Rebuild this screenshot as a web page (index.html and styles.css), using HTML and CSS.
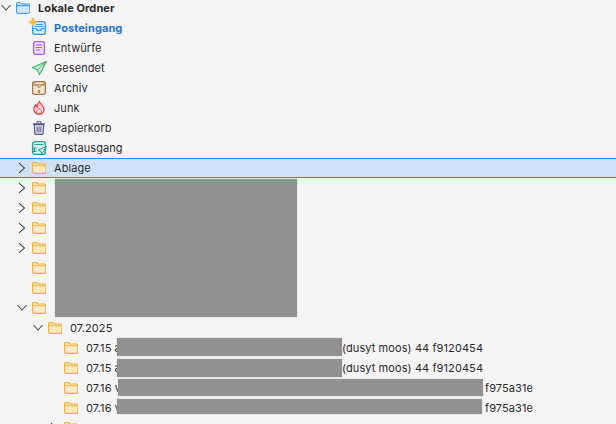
FILE: index.html
```html
<!DOCTYPE html>
<html lang="de">
<head>
<meta charset="utf-8">
<title>Lokale Ordner</title>
<link rel="stylesheet" href="styles.css">
</head>
<body>
<svg class="defs" width="0" height="0" aria-hidden="true">
  <defs>
    <symbol id="chev-r" viewBox="0 0 10 12"><path d="M2 1.200 7.600 6 2 10.800" fill="none" stroke="#444" stroke-width="1.050"/></symbol>
    <symbol id="chev-d" viewBox="0 0 12 10"><path d="M1.500 2 6 7 10.500 2" fill="none" stroke="#444" stroke-width="1.050"/></symbol>
    <symbol id="folder" viewBox="0 0 14 12"><path d="M.6 2V1.300q0-.7.7-.7h3.400l1.200 1.400h6.800q1.200 0 1.200 1.200v6.900q0 1.300-1.300 1.300H1.900Q.6 11.400.6 10.100Z" fill="#f7e8cb" stroke="#efb02e" stroke-width="1.100"/><path d="M.6 3.700h12.800" fill="none" stroke="#efb02e" stroke-width="1"/></symbol>
  </defs>
</svg>
<main class="tree">
  <div class="row top">
    <svg class="chev chev-down" width="12" height="10"><use href="#chev-d"/></svg>
    <svg class="icon" width="14" height="12" viewBox="0 0 14 12"><path d="M.6 2V1.300q0-.7.7-.7h3.400l1.200 1.400h6.800q1.200 0 1.200 1.200v6.900q0 1.300-1.300 1.300H1.900Q.6 11.400.6 10.100Z" fill="#cfe3f8" stroke="#2f8fe8" stroke-width="1"/><path d="M.6 3.700h12.800" fill="none" stroke="#2f8fe8"/></svg>
    <span class="label bold">Lokale Ordner</span>
  </div>

  <div class="row lvl1">
    <svg class="icon glyph" width="14" height="14" viewBox="0 0 14 14"><rect x=".6" y=".6" width="12.800" height="12.800" rx="2.500" fill="#d8eafb" stroke="#3d97e6" stroke-width="1.300"/><path d="M3.500 3.500h7.500M2.500 5.500h9M.6 7.500h3.600q.5 2.200 2.800 2.200t2.800-2.200h3.600" fill="none" stroke="#3d97e6" stroke-width="1.200"/><path d="M1-3.300C1.600-1.400 3.400.400 5.300 1 3.400 1.600 1.600 3.400 1 5.300.4 3.400-1.400 1.600-3.300 1-1.400.4.400-1.400 1-3.300Z" fill="#f6bd45" stroke="#f6bd45" stroke-width=".8"/></svg>
    <span class="label inbox">Posteingang</span>
  </div>
  <div class="row lvl1">
    <svg class="icon glyph" width="14" height="14" viewBox="0 0 14 14"><rect x="1.600" y=".6" width="10.800" height="12.800" rx="1.600" fill="#ecdcfb" stroke="#a65ef0" stroke-width="1.300"/><path d="M4 4h6M4 6.500h6M4 9h4" stroke="#a65ef0" fill="none"/></svg>
    <span class="label">Entwürfe</span>
  </div>
  <div class="row lvl1">
    <svg class="icon glyph" width="14" height="14" viewBox="0 0 14 14"><path d="M14.300.6.600 6.500l4.700 2.300 2.200 4.700Z" fill="#d6f2de" stroke="#3fb56b" stroke-width="1.300" stroke-linejoin="round"/><path d="M14.300.6 5.300 8.800" stroke="#3fb56b" fill="none"/></svg>
    <span class="label">Gesendet</span>
  </div>
  <div class="row lvl1">
    <svg class="icon glyph" width="14" height="14" viewBox="0 0 14 14"><rect x=".6" y=".6" width="12.800" height="12.800" rx="1.800" fill="#f2e2d0" stroke="#a5764d" stroke-width="1.300"/><path d="M.6 4h12.800M1 1l6 5.500L13 1M6 9l2 1-2 1 2 1" stroke="#a5764d" fill="none"/></svg>
    <span class="label">Archiv</span>
  </div>
  <div class="row lvl1">
    <svg class="icon glyph" width="14" height="14" viewBox="0 0 14 14"><path d="M7.400.6c.5 2.500 4.700 4 4.700 7.700 0 3-2.300 5-5 5s-5.200-2-5.200-5c0-2 1-3.500 2-4.500.2 1 .6 1.700 1.300 2.200C5.100 4 6 2 7.400.6Z" fill="#fbdada" stroke="#e8474c" stroke-width="1.300"/><path d="M7 13c-1.500 0-2.400-1-2.400-2.200C4.600 9.600 6.100 8.800 7 7.300c1 1.500 2.400 2.300 2.400 3.500C9.400 12 8.400 13 7 13Z" fill="#f4f4f4" stroke="#e8474c"/></svg>
    <span class="label">Junk</span>
  </div>
  <div class="row lvl1">
    <svg class="icon glyph" width="14" height="14" viewBox="0 0 14 14"><path d="M2.300 3.500h9.400l-.6 8.600q-.1 1.300-1.400 1.300H4.300q-1.300 0-1.400-1.300Z" fill="#e7e7f0" stroke="#5b5a85" stroke-width="1.300"/><path d="M.8 2.800h12.400M5 2.500V.7h4v1.800M5.200 5.500v6M7 5.500v6M8.800 5.500v6" stroke="#5b5a85" fill="none"/></svg>
    <span class="label">Papierkorb</span>
  </div>
  <div class="row lvl1">
    <svg class="icon glyph" width="14" height="14" viewBox="0 0 14 14"><rect x=".6" y=".6" width="12.800" height="12.800" rx="2.500" fill="#d7f0ef" stroke="#259c9c" stroke-width="1.300"/><path d="M2.500 3.500h9M.6 7h4M2.500 7v3M.6 10.500h4" stroke="#259c9c" fill="none" stroke-width="1.100"/><path d="M14.500 5.500 6 9l2.700 1.100 1.100 3Z" fill="#d7f0ef" stroke="#259c9c" stroke-linejoin="round"/></svg>
    <span class="label">Postausgang</span>
  </div>
  <div class="row lvl1 selected">
    <svg class="chev chev-right" width="10" height="12"><use href="#chev-r"/></svg>
    <svg class="icon folder" width="14" height="12"><use href="#folder"/></svg>
    <span class="label">Ablage</span>
  </div>
  <div class="row lvl1">
    <svg class="chev chev-right" width="10" height="12"><use href="#chev-r"/></svg>
    <svg class="icon folder" width="14" height="12"><use href="#folder"/></svg>
  </div>
  <div class="row lvl1">
    <svg class="chev chev-right" width="10" height="12"><use href="#chev-r"/></svg>
    <svg class="icon folder" width="14" height="12"><use href="#folder"/></svg>
  </div>
  <div class="row lvl1">
    <svg class="chev chev-right" width="10" height="12"><use href="#chev-r"/></svg>
    <svg class="icon folder" width="14" height="12"><use href="#folder"/></svg>
  </div>
  <div class="row lvl1">
    <svg class="chev chev-right" width="10" height="12"><use href="#chev-r"/></svg>
    <svg class="icon folder" width="14" height="12"><use href="#folder"/></svg>
  </div>
  <div class="row lvl1">
    <svg class="icon folder" width="14" height="12"><use href="#folder"/></svg>
  </div>
  <div class="row lvl1">
    <svg class="icon folder" width="14" height="12"><use href="#folder"/></svg>
  </div>
  <div class="row lvl1">
    <svg class="chev chev-down" width="12" height="10"><use href="#chev-d"/></svg>
    <svg class="icon folder" width="14" height="12"><use href="#folder"/></svg>
  </div>
  <div class="row lvl2">
    <svg class="chev chev-down" width="12" height="10"><use href="#chev-d"/></svg>
    <svg class="icon folder" width="14" height="12"><use href="#folder"/></svg>
    <span class="label">07.2025</span>
  </div>
  <div class="row lvl3">
    <svg class="icon folder" width="14" height="12"><use href="#folder"/></svg>
    <span class="label">07.15 a</span>
    <span class="label tail tail-a">(dusyt moos) 44 f9120454</span>
  </div>
  <div class="row lvl3">
    <svg class="icon folder" width="14" height="12"><use href="#folder"/></svg>
    <span class="label">07.15 a</span>
    <span class="label tail tail-a">(dusyt moos) 44 f9120454</span>
  </div>
  <div class="row lvl3">
    <svg class="icon folder" width="14" height="12"><use href="#folder"/></svg>
    <span class="label">07.16 v</span>
    <span class="label tail tail-b">f975a31e</span>
  </div>
  <div class="row lvl3">
    <svg class="icon folder" width="14" height="12"><use href="#folder"/></svg>
    <span class="label">07.16 v</span>
    <span class="label tail tail-b">f975a31e</span>
  </div>
  <div class="row lvl3">
    <svg class="chev chev-right" width="10" height="12"><use href="#chev-r"/></svg>
    <svg class="icon folder" width="14" height="12"><use href="#folder"/></svg>
  </div>
</main>
<div class="redact r-big"></div>
<div class="redact r1"></div>
<div class="redact r2"></div>
<div class="redact r3"></div>
<div class="redact r4"></div>
</body>
</html>
```
FILE: styles.css
```css
html, body {
  margin: 0;
  height: 424px;
  overflow: hidden;
  background: #f4f4f4;
}
.defs { display: block; height: 0; }
.tree {
  margin-top: -2px;
  font-family: Inter, "Liberation Sans", sans-serif;
  font-size: 11px;
  letter-spacing: 0.09px;
  color: #2a2a2a;
}
.row {
  box-sizing: border-box;
  height: 20px;
  display: flex;
  align-items: center;
  position: relative;
}
.chev { position: absolute; top: 50%; }
.chev-right { left: 17px; margin-top: -6px; }
.chev-down { left: 16px; margin-top: -5px; }
.top { padding-left: 16px; }
.top .chev-down { left: 0; }
.top .icon { margin-right: 8px; }
.lvl1 { padding-left: 32px; }
.lvl2 { padding-left: 48px; }
.lvl2 .chev-down { left: 32px; }
.lvl3 { padding-left: 64px; }
.lvl3 .chev-right { left: 49px; }
.icon { flex: none; }
.folder { margin-right: 8px; }
.glyph { overflow: visible; margin-right: 8px; }
.label { white-space: nowrap; }
.bold { font-weight: 700; }
.inbox { font-weight: 700; color: #1f74d9; }
.selected {
  background: #cfe2f5;
  border-top: 1px solid #2a8cf0;
  border-bottom: 1px solid #2a8cf0;
}
.tail { position: absolute; }
.tail-a { left: 342px; }
.tail-b { left: 485px; }
.redact { position: absolute; background: #919191; box-shadow: 0 0 1px #b5b5b5; }
.r-big { left: 55px; top: 179px; width: 242px; height: 138px; }
.r1 { left: 117px; top: 338px; width: 225px; height: 18px; }
.r2 { left: 117px; top: 359px; width: 225px; height: 18px; }
.r3 { left: 118px; top: 379px; width: 365px; height: 17px; }
.r4 { left: 117px; top: 399px; width: 365px; height: 15px; }
```
